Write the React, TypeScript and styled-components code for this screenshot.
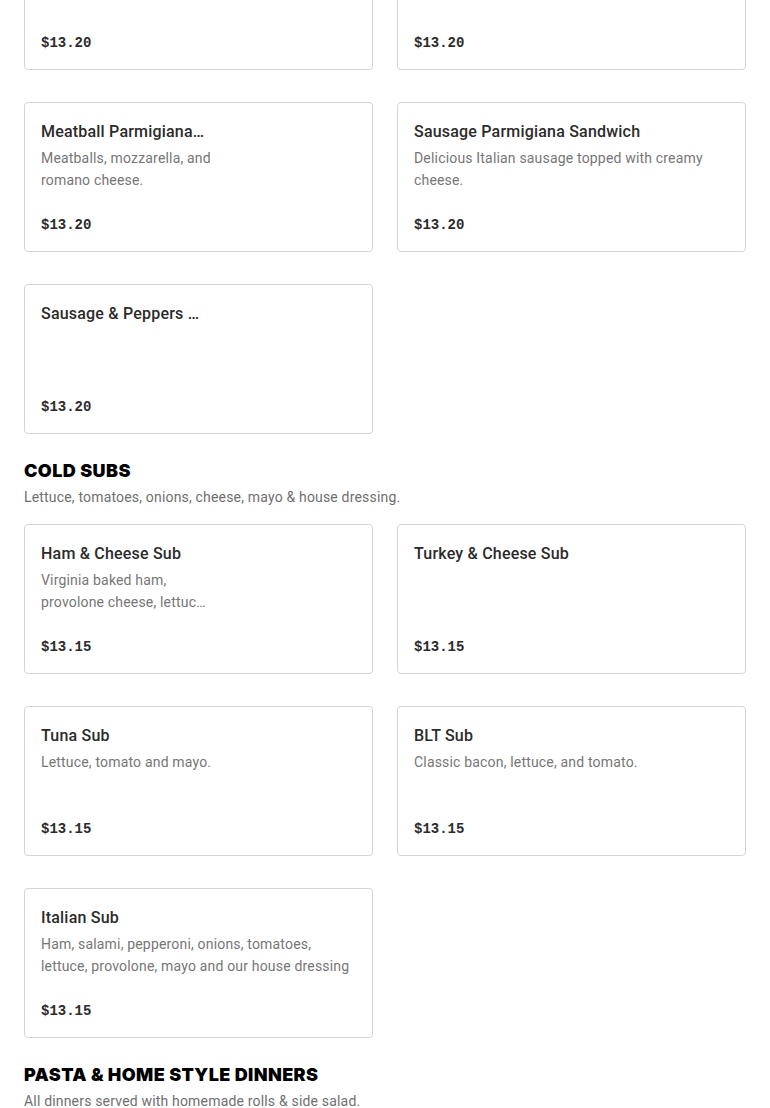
import styled, {createGlobalStyle} from "styled-components";

const GlobalStyle = createGlobalStyle`
    html, body {
        margin: 0;
        padding: 0;
        background: #fff;
        font-family: Roboto, "Liberation Sans", sans-serif;
        color: #2b2b2b;
    }
`;

const Page = styled.main`
    padding: 0 24px;
    overflow: hidden;
`;

const Section = styled.section<{$first?: boolean}>`
    margin-top: ${({$first}) => ($first ? "-80px" : "25px")};
`;

const SectionTitle = styled.h2`
    margin: 0;
    font-family: Inter, "Liberation Sans", sans-serif;
    font-weight: 900;
    font-size: 18px;
    line-height: 24px;
    letter-spacing: 0.4px;
    color: #000;
    text-transform: uppercase;
`;

const SectionNote = styled.p`
    margin: 4px 0 0;
    font-size: 14px;
    line-height: 20px;
    letter-spacing: 0.18px;
    color: #6f6f6f;
`;

const Grid = styled.div<{$hasHeader?: boolean}>`
    display: grid;
    grid-template-columns: 1fr 1fr;
    column-gap: 24px;
    row-gap: 32px;
    margin-top: ${({$hasHeader}) => ($hasHeader ? "17px" : "0")};
`;

const Card = styled.article`
    box-sizing: border-box;
    height: 150px;
    padding: 17px 16px 16px;
    border: 1px solid #d4d4d4;
    border-radius: 4px;
    background: #fff;
    display: flex;
`;

// cards with a photo keep their text in a narrow column on the left
const CardText = styled.div<{$narrow?: boolean}>`
    display: flex;
    flex-direction: column;
    min-width: 0;
    width: ${({$narrow}) => ($narrow ? "170px" : "100%")};
`;

const Thumb = styled.div`
    flex: 1;
`;

const ItemName = styled.h3<{$narrow?: boolean}>`
    margin: 0;
    max-width: ${({$narrow}) => ($narrow ? "165px" : "none")};
    font-size: 16px;
    font-weight: 500;
    line-height: 24px;
    letter-spacing: 0.2px;
    color: #2b2b2b;
    white-space: nowrap;
    overflow: hidden;
    text-overflow: ellipsis;
`;

const ItemDesc = styled.p`
    margin: 3px 0 0;
    font-size: 14px;
    line-height: 22px;
    letter-spacing: 0.18px;
    color: #767676;
    display: -webkit-box;
    -webkit-line-clamp: 2;
    -webkit-box-orient: vertical;
    overflow: hidden;
`;

const Price = styled.div`
    margin-top: auto;
    font-family: "Liberation Mono", monospace;
    font-weight: 700;
    font-size: 14px;
    line-height: 20px;
    color: #2b2b2b;
`;

type Item = {
    name: string;
    desc?: string;
    price: string;
    image?: boolean;
};

type MenuSection = {
    title?: string;
    note?: string;
    items: Item[];
};

const menu: MenuSection[] = [
    {
        items: [
            {name: "Chicken Parmigiana Sandwich", desc: "Breaded chicken cutlet with mozzarella.", price: "$13.20"},
            {name: "Eggplant Parmigiana Sandwich", desc: "Breaded eggplant with mozzarella.", price: "$13.20"},
            {name: "Meatball Parmigiana Sandwich", desc: "Meatballs, mozzarella, and romano cheese.", price: "$13.20", image: true},
            {name: "Sausage Parmigiana Sandwich", desc: "Delicious Italian sausage topped with creamy cheese.", price: "$13.20"},
            {name: "Sausage & Peppers Sandwich", price: "$13.20", image: true},
        ],
    },
    {
        title: "Cold Subs",
        note: "Lettuce, tomatoes, onions, cheese, mayo & house dressing.",
        items: [
            {name: "Ham & Cheese Sub", desc: "Virginia baked ham, provolone cheese, lettuce, tomato and mayo.", price: "$13.15", image: true},
            {name: "Turkey & Cheese Sub", price: "$13.15"},
            {name: "Tuna Sub", desc: "Lettuce, tomato and mayo.", price: "$13.15"},
            {name: "BLT Sub", desc: "Classic bacon, lettuce, and tomato.", price: "$13.15"},
            {name: "Italian Sub", desc: "Ham, salami, pepperoni, onions, tomatoes, lettuce, provolone, mayo and our house dressing", price: "$13.15"},
        ],
    },
    {
        title: "Pasta & Home Style Dinners",
        note: "All dinners served with homemade rolls & side salad.",
        items: [],
    },
];

const MenuCard = ({item}: {item: Item}) => (
    <Card>
        <CardText $narrow={item.image}>
            <ItemName $narrow={item.image}>{item.name}</ItemName>
            {item.desc && <ItemDesc>{item.desc}</ItemDesc>}
            <Price>{item.price}</Price>
        </CardText>
        {item.image && <Thumb/>}
    </Card>
);

const App = () => (
    <>
        <GlobalStyle/>
        <Page>
            {menu.map((section, i) => (
                <Section key={i} $first={i === 0}>
                    {section.title && <SectionTitle>{section.title}</SectionTitle>}
                    {section.note && <SectionNote>{section.note}</SectionNote>}
                    {section.items.length > 0 && (
                        <Grid $hasHeader={!!section.title}>
                            {section.items.map((item) => (
                                <MenuCard key={item.name} item={item}/>
                            ))}
                        </Grid>
                    )}
                </Section>
            ))}
        </Page>
    </>
);

export default App;
